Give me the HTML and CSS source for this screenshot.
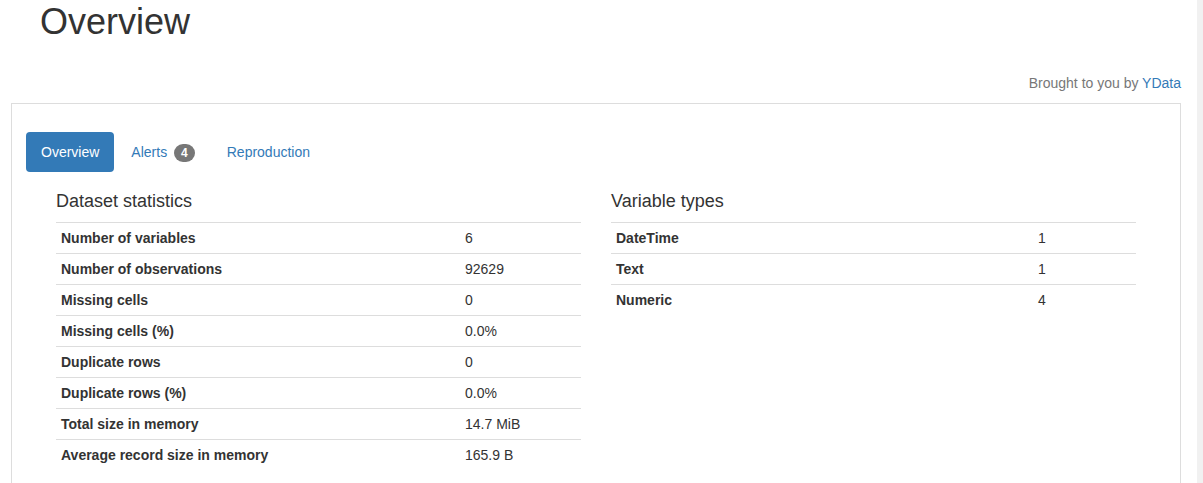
FILE: index.html
```html
<!DOCTYPE html>
<html lang="en">
<head>
<meta charset="utf-8">
<title>Overview</title>
<link rel="stylesheet" href="styles.css">
</head>
<body>
<div class="layout">
  <main class="page">
    <h1 class="page-title">Overview</h1>
    <p class="credit">Brought to you by <a href="#" class="link">YData</a></p>
    <section class="panel">
      <ul class="pills">
        <li class="pill active"><a href="#">Overview</a></li>
        <li class="pill"><a href="#">Alerts <span class="badge">4</span></a></li>
        <li class="pill"><a href="#">Reproduction</a></li>
      </ul>
      <div class="tab-content">
        <div class="col">
          <p class="h4">Dataset statistics</p>
          <table class="stats stats-left">
            <tbody>
              <tr><th>Number of variables</th><td>6</td></tr>
              <tr><th>Number of observations</th><td>92629</td></tr>
              <tr><th>Missing cells</th><td>0</td></tr>
              <tr><th>Missing cells (%)</th><td>0.0%</td></tr>
              <tr><th>Duplicate rows</th><td>0</td></tr>
              <tr><th>Duplicate rows (%)</th><td>0.0%</td></tr>
              <tr><th>Total size in memory</th><td>14.7 MiB</td></tr>
              <tr><th>Average record size in memory</th><td>165.9 B</td></tr>
            </tbody>
          </table>
        </div>
        <div class="col">
          <p class="h4">Variable types</p>
          <table class="stats stats-right">
            <tbody>
              <tr><th>DateTime</th><td>1</td></tr>
              <tr><th>Text</th><td>1</td></tr>
              <tr><th>Numeric</th><td>4</td></tr>
            </tbody>
          </table>
        </div>
      </div>
    </section>
  </main>
  <div class="scroll-strip"></div>
</div>
</body>
</html>
```
FILE: styles.css
```css
* {
  box-sizing: border-box;
}

html, body {
  margin: 0;
  overflow: hidden;
  background: #fff;
}

body {
  font-family: "Liberation Sans", Arial, Helvetica, sans-serif;
  font-size: 14px;
  line-height: 1.42857;
  color: #333;
}

.layout {
  display: flex;
  min-height: 100vh;
}

.page {
  flex: 1;
  padding: 0 16px 0 11px;
}

.scroll-strip {
  width: 6px;
  background: #f1f1f1;
}

.page-title {
  font-size: 36px;
  font-weight: 500;
  line-height: 1.1;
  margin: 2px 0 0 29px;
  color: #333;
}

.credit {
  margin: 31px 0 10px;
  text-align: right;
  color: #777;
  line-height: 20px;
}

.link {
  color: #337ab7;
  text-decoration: none;
}

.panel {
  border: 1px solid #ddd;
  padding: 28px 14px 24px;
}

.pills {
  list-style: none;
  margin: 0;
  padding: 0;
  display: flex;
  gap: 2px;
}

.pill a {
  display: block;
  padding: 10px 15px;
  border-radius: 4px;
  color: #337ab7;
  text-decoration: none;
  line-height: 20px;
}

.pill.active a {
  background: #337ab7;
  color: #fff;
}

.badge {
  display: inline-block;
  min-width: 10px;
  padding: 3px 7px;
  margin-left: 3px;
  font-size: 12px;
  font-weight: 700;
  line-height: 1;
  color: #fff;
  text-align: center;
  white-space: nowrap;
  vertical-align: middle;
  background: #777;
  border-radius: 10px;
}

.tab-content {
  display: grid;
  grid-template-columns: 1fr 1fr;
  padding: 0 15px;
  margin-top: 20px;
}

.col {
  padding: 0 15px;
}

.h4 {
  font-size: 18px;
  font-weight: 500;
  line-height: 1.1;
  margin: 0 0 10px;
  color: #333;
}

.stats {
  width: 100%;
  border-collapse: collapse;
  border-spacing: 0;
}

.stats th,
.stats td {
  padding: 5px;
  border-top: 1px solid #ddd;
  text-align: left;
  vertical-align: top;
  line-height: 20px;
}

.stats th {
  font-weight: 700;
}

.stats-left th {
  width: 404px;
}

.stats-right th {
  width: 422px;
}
```
